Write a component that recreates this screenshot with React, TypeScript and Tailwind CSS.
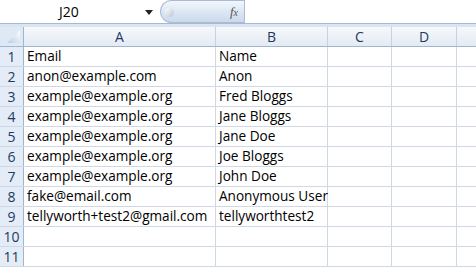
const cols = [
  { key: "A", width: 192 },
  { key: "B", width: 112 },
  { key: "C", width: 64 },
  { key: "D", width: 65 },
  { key: "", width: 64 },
];

const rows: [string, string][] = [
  ["Email", "Name"],
  ["anon@example.com", "Anon"],
  ["example@example.org", "Fred Bloggs"],
  ["example@example.org", "Jane Bloggs"],
  ["example@example.org", "Jane Doe"],
  ["example@example.org", "Joe Bloggs"],
  ["example@example.org", "John Doe"],
  ["fake@email.com", "Anonymous User"],
  ["tellyworth+test2@gmail.com", "tellyworthtest2"],
  ["", ""],
  ["", ""],
];

const font = { fontFamily: '"Open Sans", "Noto Sans", sans-serif' };

function FormulaBar() {
  return (
    <div className="flex h-[24px] border-b border-[#a5b9d1] bg-white">
      <div className="relative flex w-[160px] items-center justify-center text-[14px] text-black">
        <span className="-ml-[22px]">J20</span>
        <svg className="absolute right-[7px] top-[10px]" width="8" height="5" viewBox="0 0 8 5">
          <path d="M0 0 H8 L4 5 Z" fill="#222" />
        </svg>
      </div>
      <div className="relative flex w-[84px] items-center justify-end rounded-l-full border border-r-0 border-[#a9bcd6] bg-gradient-to-b from-[#f3f7fc] via-[#dde7f4] to-[#cbd9ec] pr-[6px]">
        <span className="absolute left-[4px] top-[7px] h-[9px] w-[9px] rounded-full bg-gradient-to-br from-[#ffffff] to-[#b8c4d2]" />
        <span className="text-[13px] italic text-[#555]" style={{ fontFamily: '"Liberation Serif", serif' }}>
          f<span className="text-[10px]">x</span>
        </span>
      </div>
      <div className="flex-1 border-l border-[#a9bcd6] bg-white" />
    </div>
  );
}

export default function App() {
  return (
    <div className="h-[269px] w-[476px] overflow-hidden bg-white" style={font}>
      <FormulaBar />
      <div className="h-[3px] bg-[#dbe5f1]" />
      <div className="flex h-[20px] border-b border-[#9eb6ce]">
        <div className="relative w-[24px] shrink-0 border-r border-[#9eb6ce] bg-[#dfe8f5]">
          <svg className="absolute bottom-[3px] right-[3px]" width="13" height="13" viewBox="0 0 13 13">
            <defs>
              <linearGradient id="tri" x1="0" y1="1" x2="1" y2="0">
                <stop offset="0" stopColor="#b9cde5" />
                <stop offset="1" stopColor="#ffffff" />
              </linearGradient>
            </defs>
            <path d="M13 0 V13 H0 Z" fill="url(#tri)" />
          </svg>
        </div>
        {cols.map((c, j) => (
          <div
            key={j}
            className="flex shrink-0 items-center justify-center border-r border-[#c5d2e3] bg-gradient-to-b from-[#f6f8fb] to-[#e4eaf3] text-[14px] text-[#1e3a5f]"
            style={{ width: c.width }}
          >
            {c.key}
          </div>
        ))}
      </div>
      {rows.map((r, i) => (
        <div key={i} className="flex h-[20px] border-b border-[#d0d7e5]">
          <div className="flex w-[24px] shrink-0 items-center justify-center border-r border-[#9eb6ce] bg-[#e4ecf7] text-[14px] text-[#1e3a5f]">
            {i + 1}
          </div>
          {cols.map((c, j) => (
            <div
              key={j}
              className="flex shrink-0 items-center overflow-visible whitespace-nowrap border-r border-[#d0d7e5] pl-[3px] text-[13.6px] text-black"
              style={{ width: c.width }}
            >
              {j === 0 ? r[0] : j === 1 ? r[1] : ""}
            </div>
          ))}
        </div>
      ))}
    </div>
  );
}
